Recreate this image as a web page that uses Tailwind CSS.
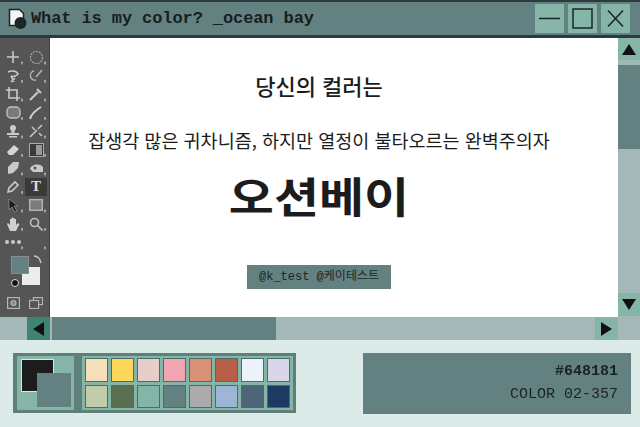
<!DOCTYPE html>
<html lang="ko">
<head>
    <meta charset="UTF-8">
    <title>What is my color?</title>
    <script src="https://cdn.jsdelivr.net/npm/@tailwindcss/browser@4"></script>
</head>
<body class="m-0 w-[640px] h-[427px] overflow-hidden bg-[#dceae8] font-['Liberation_Mono',monospace]">
  <div class="blur-[0.4px]">

    <!-- Title bar -->
    <header class="h-[38px] flex items-center justify-between bg-[#648181] border-t-2 border-b-[3px] border-t-[#2c3a3d] border-b-[#2c3a3d] pl-[8px] pr-[10px]">
        <div class="flex items-center gap-[3px]">
            <svg width="20" height="21" viewBox="0 0 20 21">
                <path d="M1.5 1.5h10l4 4v12h-14z" fill="#f4f6f5" stroke="#1d2626" stroke-width="1.5"/>
                <circle cx="12.5" cy="15" r="6" fill="#1d2626"/>
            </svg>
            <span class="text-[17px] leading-none text-[#17201f] font-bold tracking-[-0.1px]">What is my color? _ocean bay</span>
        </div>
        <div class="flex gap-[4px]">
            <div class="w-[29px] h-[29px] bg-[#84b5a7] flex items-center justify-center">
                <svg width="21" height="21" viewBox="0 0 21 21"><path d="M0 10.5h21" stroke="#1d2626" stroke-width="1.5"/></svg>
            </div>
            <div class="w-[29px] h-[29px] bg-[#84b5a7] flex items-center justify-center">
                <svg width="21" height="21" viewBox="0 0 21 21"><rect x="1" y="1" width="19" height="19" fill="none" stroke="#1d2626" stroke-width="1.5"/></svg>
            </div>
            <div class="w-[29px] h-[29px] bg-[#84b5a7] flex items-center justify-center">
                <svg width="19" height="19" viewBox="0 0 19 19"><path d="M2 1.5l15 16M17 1.5l-15 16" stroke="#1d2626" stroke-width="1.6"/></svg>
            </div>
        </div>
    </header>

    <div class="h-[279px] flex">
        <!-- Tools -->
        <aside class="w-[50px] shrink-0 bg-[#555555] border-r border-r-[#3f3f3f] flex flex-col items-center pt-[10px]">
            <div class="grid grid-cols-[23px_23px] auto-rows-[18.5px] justify-items-center items-center bg-[radial-gradient(circle_at_20px_15px,#a8a8a8_1px,transparent_1.5px)] bg-size-[23px_18.5px]">
                <svg width="14" height="14" viewBox="0 0 14 14" fill="none" stroke="#c9c9c9" stroke-width="1.6"><path d="M7 1v12M1 7h12"/></svg>
                <svg width="15" height="15" viewBox="0 0 15 15" fill="none" stroke="#a8a8a8" stroke-width="1.2" stroke-dasharray="2 1"><circle cx="7.5" cy="7.5" r="6"/></svg>
                <svg width="14" height="14" viewBox="0 0 14 14" fill="none" stroke="#c9c9c9" stroke-width="1.6"><path d="M2 3c4-2 9-1 10 2-2 2-5 3-7 2M5 7l3 6M5 13l4-4"/></svg>
                <svg width="15" height="15" viewBox="0 0 15 15" fill="none" stroke="#b8b8b8" stroke-width="1.4"><path d="M5 3a4.500 4.500 0 1 0 2 9M7 9l6-7"/></svg>
                <svg width="14" height="14" viewBox="0 0 14 14" fill="none" stroke="#c9c9c9" stroke-width="1.6"><path d="M3 0v11h11M0 3h11v11"/></svg>
                <svg width="14" height="14" viewBox="0 0 14 14" fill="none" stroke="#c9c9c9" stroke-width="2"><path d="M1 13l8-8M8 2l4 4"/></svg>
                <svg width="15" height="13" viewBox="0 0 15 13" fill="#7a7a7a" stroke="#c0c0c0" stroke-width="1.4"><rect x="1" y="1" width="13" height="11" rx="4"/></svg>
                <svg width="14" height="14" viewBox="0 0 14 14" fill="none" stroke="#d0d0d0" stroke-width="2"><path d="M1 13c1-4 6-9 11-12"/></svg>
                <svg width="14" height="14" viewBox="0 0 14 14" fill="#c9c9c9"><circle cx="7" cy="4" r="3"/><path d="M5.500 6h3v3h-3zM1 9h12v2H1zM3 12h8v1.500H3z"/></svg>
                <svg width="14" height="14" viewBox="0 0 14 14" fill="none" stroke="#c4c4c4" stroke-width="1.6"><path d="M1 13l7-7M9 5l4-4M3 3l3 3M10 9l3 3"/></svg>
                <svg width="14" height="12" viewBox="0 0 14 12" fill="#d4d4d4"><path d="M1 8l7-7 5 4-6 6H3z"/></svg>
                <svg width="15" height="14" viewBox="0 0 15 14"><rect x="0.500" y="0.500" width="14" height="13" fill="#3a3a3a" stroke="#aaa"/><rect x="7" y="2" width="6" height="10" fill="#999"/></svg>
                <svg width="14" height="14" viewBox="0 0 14 14" fill="#c9c9c9"><path d="M2 13V6l5-5 6 0-1 6-5 5z"/></svg>
                <svg width="15" height="11" viewBox="0 0 15 11" fill="#c9c9c9"><path d="M1 6c1-5 10-6 13-2v5H4z"/><circle cx="6" cy="5" r="1.500" fill="#555"/></svg>
                <svg width="14" height="14" viewBox="0 0 14 14" fill="none" stroke="#c9c9c9" stroke-width="1.6"><path d="M2 12l1-4 6-6 3 3-6 6z"/></svg>
                <div class="w-[22px] h-[18px] bg-[#3a3a3a] flex items-center justify-center text-[15px] font-bold leading-none text-[#dcdcdc] font-['Liberation_Serif',serif]">T</div>
                <svg width="12" height="15" viewBox="0 0 12 15" fill="#1c1c1c" stroke="#999" stroke-width="0.7"><path d="M2 1v11l3-3 3 5 2-1-3-5h4z"/></svg>
                <svg width="14" height="12" viewBox="0 0 14 12"><rect x="0.700" y="0.700" width="12.600" height="10.600" fill="#7c7c7c" stroke="#b5b5b5" stroke-width="1.400"/></svg>
                <svg width="15" height="16" viewBox="0 0 15 16" fill="#d0d0d0"><path d="M4 15L1 8l1-1 2 2V3h1.500v4V1.500H7V7V2h1.500v5V3H10v6l2-2 1.500 1L10 15z"/></svg>
                <svg width="14" height="14" viewBox="0 0 14 14" fill="none" stroke="#bdbdbd" stroke-width="1.600"><circle cx="5.500" cy="5.500" r="4"/><path d="M8.500 8.500l5 5"/></svg>
                <div class="flex gap-[2px] justify-self-center"><span class="w-[4px] h-[4px] rounded-full bg-[#c9c9c9]"></span><span class="w-[4px] h-[4px] rounded-full bg-[#c9c9c9]"></span><span class="w-[4px] h-[4px] rounded-full bg-[#c9c9c9]"></span></div>
            </div>
            <!-- Foreground / background -->
            <div class="relative w-[36px] h-[38px] mt-[4px] self-start ml-[11px]">
                <div class="absolute left-[11px] top-[11px] w-[18px] h-[18px] bg-[#ececec]"></div>
                <div class="absolute left-0 top-0 w-[18px] h-[18px] bg-[#648181] border border-[#8a8a8a]"></div>
                <svg class="absolute left-[22px] top-[-1px]" width="9" height="9" viewBox="0 0 9 9" fill="none" stroke="#c9c9c9" stroke-width="1.3"><path d="M1 1c4 0 6 2 7 7"/></svg>
                <div class="absolute left-0 top-[23px] w-[8px] h-[8px] bg-[#111] border border-[#ddd] rounded-full"></div>
            </div>
            <div class="flex gap-[9px] mt-[3px]">
                <svg width="13" height="12" viewBox="0 0 13 12" fill="none" stroke="#b5b5b5" stroke-width="1.200"><rect x="0.600" y="0.600" width="11.800" height="10.800"/><circle cx="6.500" cy="6" r="2.500" fill="#8a8a8a"/></svg>
                <svg width="14" height="12" viewBox="0 0 14 12" fill="#555" stroke="#b5b5b5" stroke-width="1.200"><rect x="4.500" y="0.600" width="9" height="7"/><rect x="0.600" y="3.500" width="9" height="8"/></svg>
            </div>
        </aside>

        <!-- Canvas -->
        <main class="flex-1 bg-white flex flex-col items-center text-[#1c1c1c] font-['Noto_Sans_CJK_KR',sans-serif] pt-[33px] pr-[30px]">
            <h1 class="text-[22px] leading-[28px] font-medium m-0">당신의 컬러는</h1>
            <p class="text-[18.500px] leading-[24px] mt-[29px] whitespace-nowrap">잡생각 많은 귀차니즘, 하지만 열정이 불타오르는 완벽주의자</p>
            <h2 class="text-[49px] leading-[50px] font-bold mt-[18px] scale-y-[0.85]">오션베이</h2>
            <div class="w-[144px] h-[24px] bg-[#648181] mt-[45px] flex items-center justify-center text-[12px] leading-none text-[#1d2626] whitespace-nowrap"><span class="font-['Liberation_Mono','Noto_Sans_CJK_KR',monospace]">@k_test @케이테스트</span></div>
        </main>

        <!-- Vertical scrollbar -->
        <div class="w-[22px] shrink-0 bg-[#a5b8b8] flex flex-col">
            <div class="h-[22px] bg-[#84b5a7] flex items-center justify-center">
                <svg width="14" height="11" viewBox="0 0 14 11"><path d="M7 0l7 11H0z" fill="#111"/></svg>
            </div>
            <div class="h-[84px] bg-[#648181] mt-[5px]"></div>
            <div class="flex-1"></div>
            <div class="h-[23px] bg-[#84b5a7] mb-[1px] flex items-center justify-center">
                <svg width="14" height="11" viewBox="0 0 14 11"><path d="M0 0h14L7 11z" fill="#111"/></svg>
            </div>
        </div>
    </div>

    <!-- Horizontal scrollbar -->
    <div class="h-[23px] flex bg-[#a5b8b8] pl-[27px] pr-[22px]">
        <div class="w-[23px] bg-[#3f8473] flex items-center justify-center">
            <svg width="11" height="14" viewBox="0 0 11 14"><path d="M11 0v14L0 7z" fill="#111"/></svg>
        </div>
        <div class="w-[224px] ml-[2px] bg-[#648181]"></div>
        <div class="flex-1"></div>
        <div class="w-[23px] bg-[#84b5a7] flex items-center justify-center">
            <svg width="11" height="14" viewBox="0 0 11 14"><path d="M0 0l11 7-11 7z" fill="#111"/></svg>
        </div>
    </div>

    <!-- Palette and colour info -->
    <footer class="h-[87px] flex items-start justify-between pl-[13px] pr-[9px] pt-[13px]">
        <div class="flex w-[283px] h-[60px] bg-[#5f7f7b] py-[3px] pl-[4px] pr-[3px] gap-[8px]">
            <div class="relative w-[57px] shrink-0 bg-[#84b5a7]">
                <div class="absolute left-[4px] top-[3px] w-[33px] h-[33px] bg-[#1c1c1c] border border-[#dde6e3]"></div>
                <div class="absolute left-[20px] top-[17px] w-[34px] h-[34px] bg-[#648181]"></div>
            </div>
            <div class="flex-1 bg-[#84b5a7] grid grid-cols-8 gap-[3px] px-[3px] py-[2px]">
                <div class="bg-[#f5dfb8] border-[1.5px] border-[#4f6b68]"></div>
                <div class="bg-[#fdd85d] border-[1.5px] border-[#4f6b68]"></div>
                <div class="bg-[#e6cfca] border-[1.5px] border-[#4f6b68]"></div>
                <div class="bg-[#f0a6b0] border-[1.5px] border-[#4f6b68]"></div>
                <div class="bg-[#d99176] border-[1.5px] border-[#4f6b68]"></div>
                <div class="bg-[#b45f46] border-[1.5px] border-[#4f6b68]"></div>
                <div class="bg-[#edf1fb] border-[1.5px] border-[#4f6b68]"></div>
                <div class="bg-[#d9d6ea] border-[1.5px] border-[#4f6b68]"></div>
                <div class="bg-[#c2ccaa] border-[1.5px] border-[#4f6b68]"></div>
                <div class="bg-[#5b6e4f] border-[1.5px] border-[#4f6b68]"></div>
                <div class="bg-[#84b5a7] border-[1.5px] border-[#4f6b68]"></div>
                <div class="bg-[#648181] border-[1.5px] border-[#4f6b68]"></div>
                <div class="bg-[#ababab] border-[1.5px] border-[#4f6b68]"></div>
                <div class="bg-[#9db6d6] border-[1.5px] border-[#4f6b68]"></div>
                <div class="bg-[#4e6579] border-[1.5px] border-[#4f6b68]"></div>
                <div class="bg-[#1f3a60] border-[1.5px] border-[#4f6b68]"></div>
            </div>
        </div>
        <div class="w-[268px] h-[61px] bg-[#648181] flex flex-col items-end justify-center gap-[5px] pr-[13px] text-[#1a2322] text-[15px] leading-[18px]">
            <span class="font-bold">#648181</span>
            <span>COLOR 02-357</span>
        </div>
    </footer>
  </div>

</body>
</html>
